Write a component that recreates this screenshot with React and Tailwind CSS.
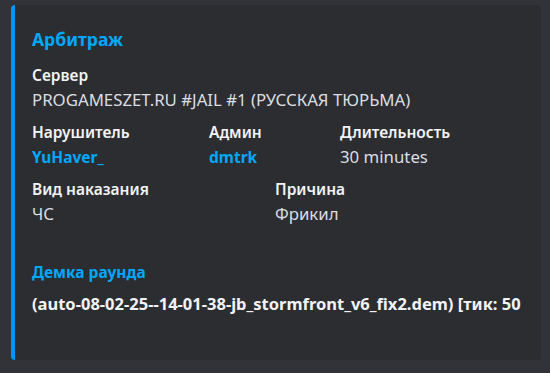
export default function App() {
  const font = { fontFamily: '"Noto Sans", "Open Sans", sans-serif' };
  const name = "text-[15.5px] leading-[20px] font-semibold text-[#f2f3f5] whitespace-nowrap";
  const val = "mt-[5px] text-[16.8px] leading-[20px] text-[#dbdee1] whitespace-nowrap";
  const link = "mt-[5px] text-[15.5px] leading-[20px] font-bold text-[#00a8fc] whitespace-nowrap";
  return (
    <div className="w-[550px] h-[373px] bg-[#313338] pt-[5px] pl-[11px]" style={font}>
      <div className="flex w-[530px] h-[355px] rounded-[4px] overflow-hidden bg-[#2b2d31]">
        <div className="w-[4px] bg-[#0096ff] shrink-0" />
        <div className="flex flex-col pl-[17px] pr-[16px] pt-[24px] min-w-0">
          <div className="text-[17.5px] leading-[20px] font-bold text-[#00a8fc]">Арбитраж</div>
          <div className={"mt-[16px] " + name}>Сервер</div>
          <div className={val}>PROGAMESZET.RU #JAIL #1 (РУССКАЯ ТЮРЬМА)</div>
          <div className="mt-[12px] flex">
            <div className="w-[177px]">
              <div className={name}>Нарушитель</div>
              <div className={link}>YuHaver_</div>
            </div>
            <div className="w-[131px]">
              <div className={name}>Админ</div>
              <div className={link}>dmtrk</div>
            </div>
            <div>
              <div className={name}>Длительность</div>
              <div className={val}>30 minutes</div>
            </div>
          </div>
          <div className="mt-[12px] flex">
            <div className="w-[243px]">
              <div className={name}>Вид наказания</div>
              <div className={val}>ЧС</div>
            </div>
            <div>
              <div className={name}>Причина</div>
              <div className={val}>Фрикил</div>
            </div>
          </div>
          <div className="mt-[38px] text-[15.5px] leading-[20px] font-bold text-[#00a8fc]">Демка раунда</div>
          <div className="mt-[12px] text-[16.5px] leading-[20px] font-bold text-[#f2f3f5] whitespace-nowrap">(auto-08-02-25--14-01-38-jb_stormfront_v6_fix2.dem) [тик: 50</div>
        </div>
      </div>
    </div>
  );
}
